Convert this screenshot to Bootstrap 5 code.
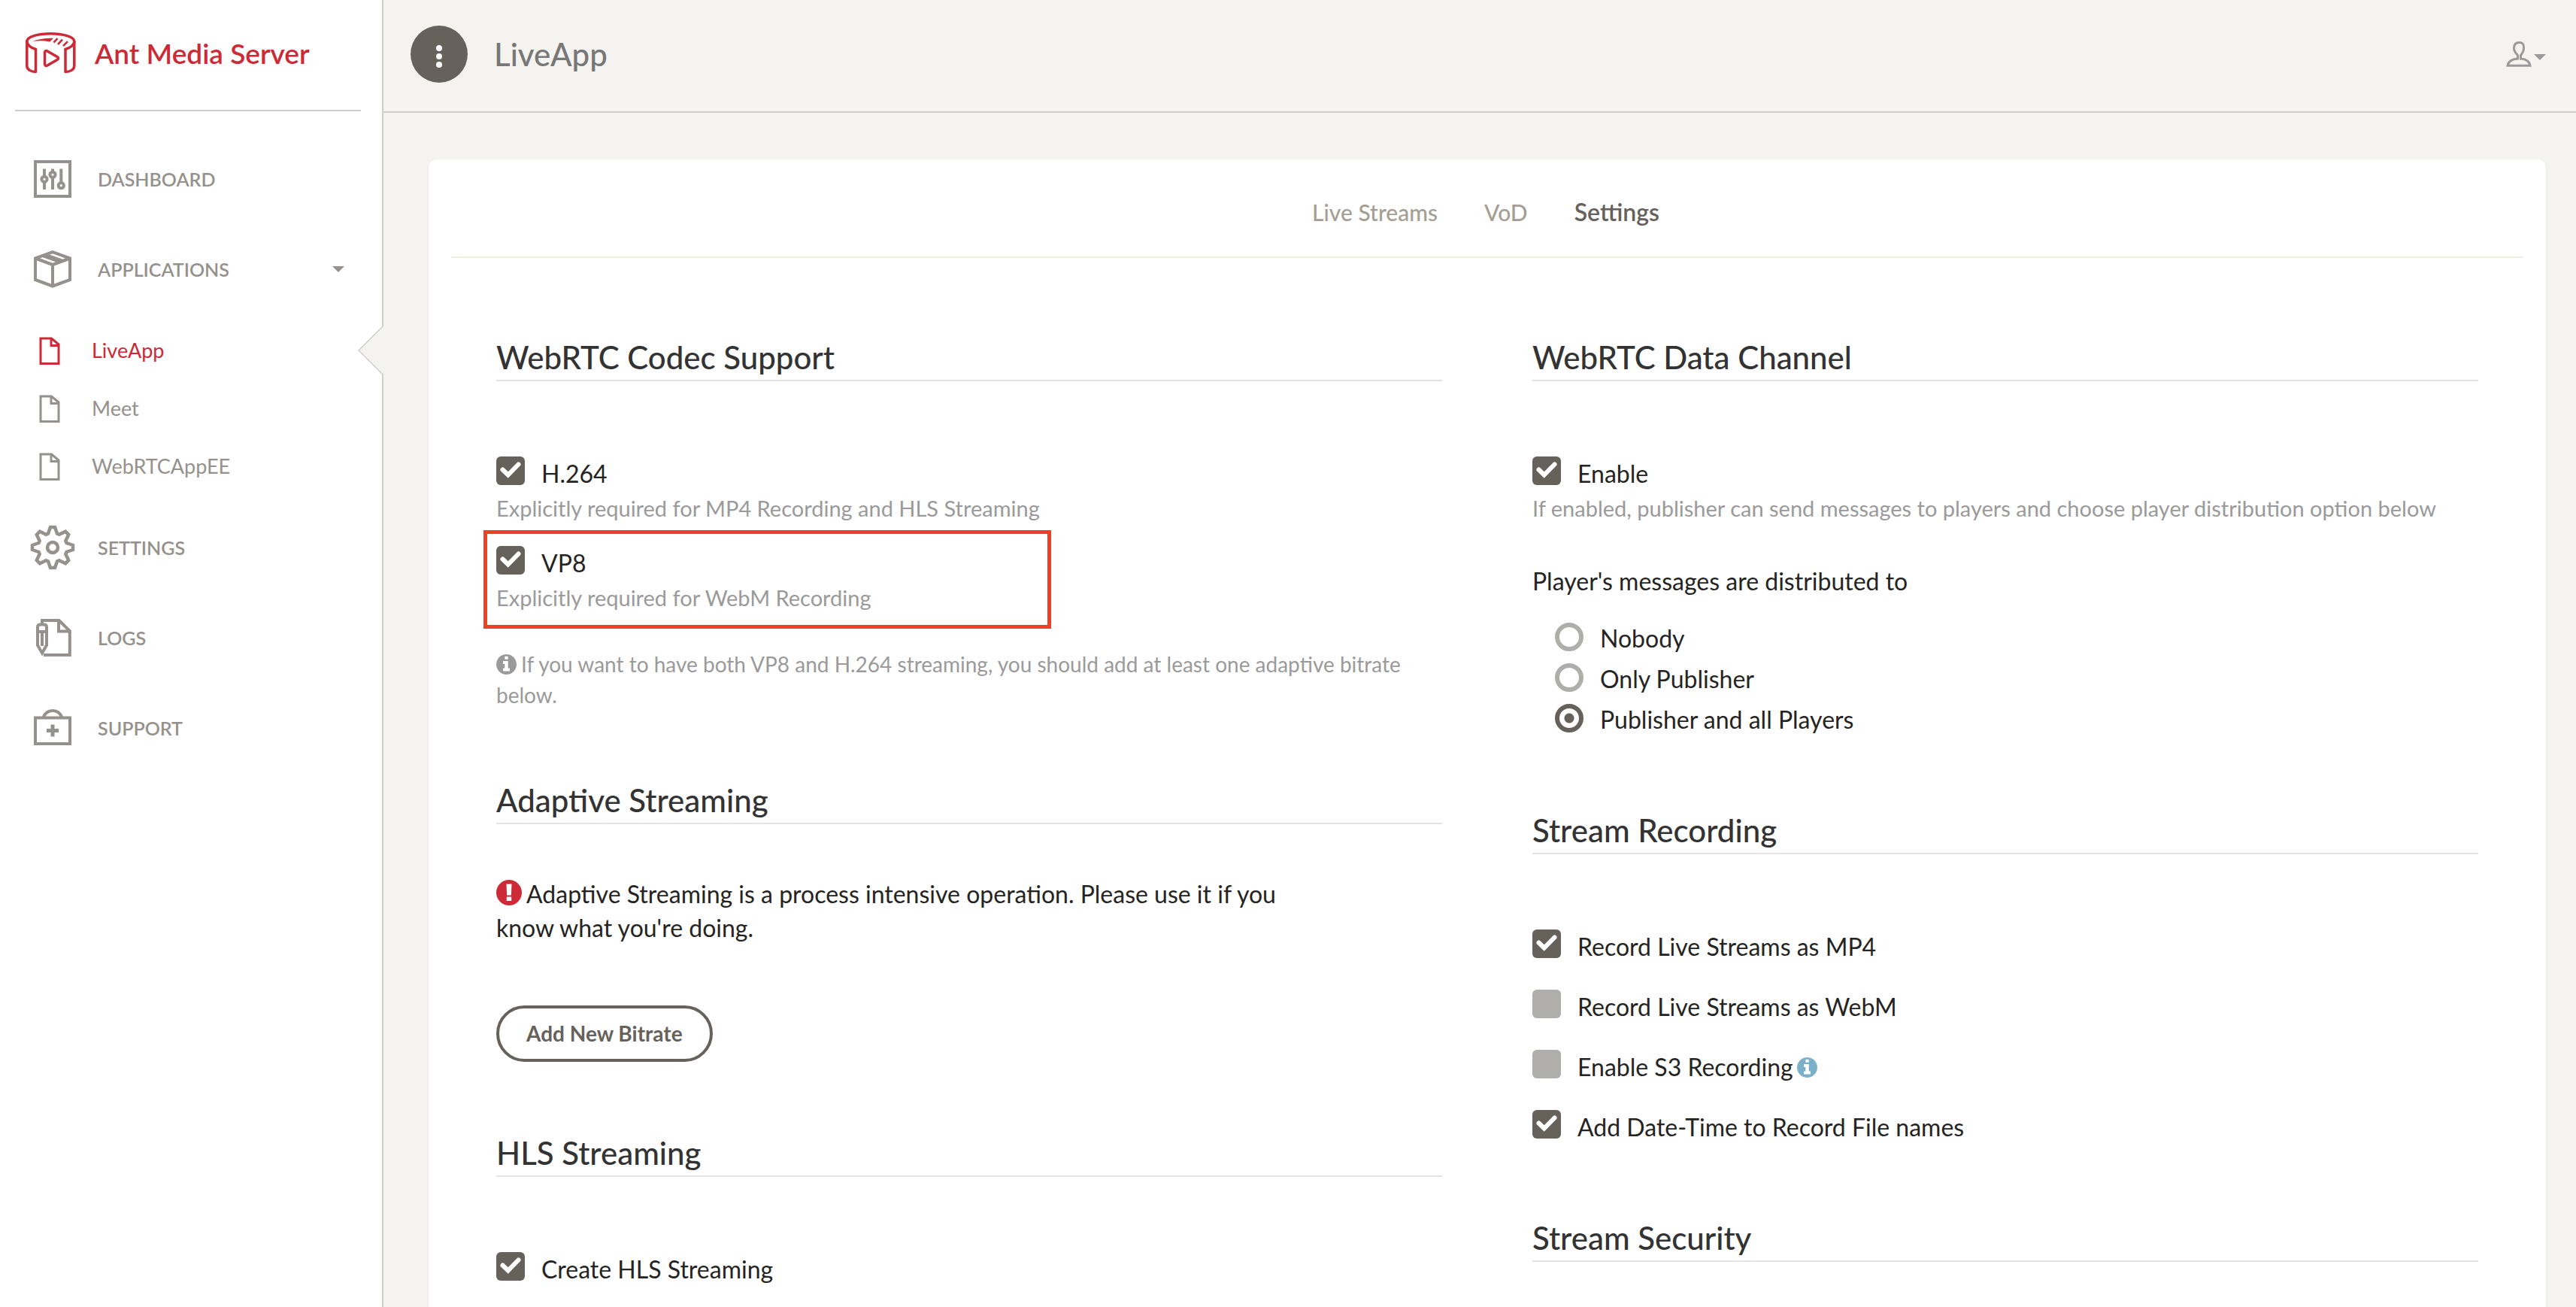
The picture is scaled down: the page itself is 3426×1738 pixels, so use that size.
<!DOCTYPE html>
<html lang="en">
<head>
<meta charset="utf-8">
<meta name="viewport" content="width=device-width, initial-scale=1">
<title>Ant Media Server - LiveApp</title>
<link href="https://cdn.jsdelivr.net/npm/bootstrap@5.3.0/dist/css/bootstrap.min.css" rel="stylesheet">
<style>
  :root { --ams-red: #cb2a36; --ams-brown: #66615b; --ams-line: #cfcfca; --ams-page: #f4f3ef; --ams-nav: #95918c; }
  body { font-family: Lato, "Open Sans", sans-serif; font-size: 32px; line-height: 46px; color: #252422; background: var(--ams-page); }
  svg { display: block; flex: none; }
  a { text-decoration: none; }

  /* sidebar */
  .side-panel { width: 510px; background: #fff; border-right: 2px solid var(--ams-line); }
  .brand-row { height: 148px; margin: 0 28px 30px 20px; padding: 0 0 4px 14px; border-bottom: 2px solid var(--ams-line); gap: 25px; color: var(--ams-red); font-size: 37px; font-weight: 600; }
  .brand-row:hover { color: var(--ams-red); }
  .side-item { height: 120px; padding: 0 50px 0 40px; gap: 30px; color: var(--ams-nav); font-size: 25px; font-weight: 600; }
  .side-sub { padding: 9px 0 10px; }
  .side-sub-item { height: 77px; padding-left: 52px; gap: 42px; color: var(--ams-nav); font-size: 27px; }
  .side-sub-item.is-current { color: var(--ams-red); }
  .notch { position: absolute; right: -2px; top: 5px; }

  /* top bar */
  .top-bar { height: 150px; padding: 0 40px 4px 36px; border-bottom: 2px solid var(--ams-line); }
  .round-btn { width: 76px; height: 76px; background: var(--ams-brown); border: 0; }
  .page-title { font-size: 42px; line-height: 48px; font-weight: 500; color: #777; margin: 0 0 0 35px; }
  .user-btn { border: 0; background: none; gap: 3px; color: #9a9a9a; }

  /* settings card */
  .main-pad { padding: 62px 40px 0 60px; }
  .panel-card { border: 0; border-radius: 12px 12px 0 0; padding: 0 30px; box-shadow: 0 2px 2px rgba(204, 197, 185, .5); }
  .tab-strip { height: 131px; border-bottom: 2px solid #f1eee2; gap: 62px; padding: 10px 4px 0 0; }
  .tab-strip .nav-link { padding: 0; font-size: 30px; font-weight: 500; color: #a49e93; }
  .tab-strip .nav-link.active { font-size: 32px; font-weight: 600; color: var(--ams-brown); }
  .cols { --bs-gutter-x: 120px; margin: 108px 0 0; }
  .sec-title { font-size: 42px; line-height: 48px; font-weight: 500; color: #333; padding-bottom: 6px; border-bottom: 2px solid #e3e3e3; margin: 0 0 100px; }
  .opt { display: flex; align-items: flex-start; gap: 22px; }
  .hint { font-size: 29px; line-height: 36px; color: #9a9a9a; margin: 5px 0 32px; }
  .note { font-size: 28px; line-height: 41px; color: #9a9a9a; margin: 50px 0 95px; }
  .warn { line-height: 45px; margin: -30px 0 81px; }
  .note svg, .warn svg { display: inline-block; margin-right: 6px; vertical-align: -3px; }

  .tick, .dot { appearance: none; flex: none; width: 38px; height: 38px; margin: 0; background-color: #afaeaa; border-radius: 6px; }
  .tick:checked { background: var(--ams-brown) url("data:image/svg+xml,%3Csvg xmlns='http://www.w3.org/2000/svg' viewBox='0 0 38 38'%3E%3Cpath fill='none' stroke='%23fff' stroke-width='6' stroke-linecap='round' d='M8.500 17.500l7.200 7L29.500 10.500' stroke-linejoin='miter'/%3E%3C/svg%3E") center/100%; }
  .dot { border-radius: 50%; border: 6px solid #afaeaa; background: #fff; }
  .dot:checked { border-color: var(--ams-brown); background: radial-gradient(circle, var(--ams-brown) 6px, #fff 7px); }
  .picks { margin: 32px 0 102px 30px; display: grid; gap: 12px; line-height: 42px; }
  .stack { display: grid; gap: 34px; margin-bottom: 100px; }
  .info-mark { color: #7bb0c9; margin-left: 5px; }
  .pill-btn { border: 4px solid var(--ams-brown); border-radius: 40px; height: 75px; padding: 0 36px; font-size: 28px; line-height: 41px; font-weight: 700; color: var(--ams-brown); margin-bottom: 97px; }
  .callout-frame { position: absolute; left: -17px; top: -21px; width: 755px; height: 131px; border: 5px solid #eb4127; pointer-events: none; }
</style>
<script src="https://cdn.jsdelivr.net/npm/bootstrap@5.3.0/dist/js/bootstrap.bundle.min.js"></script>
</head>
<body>
<svg width="0" height="0" class="position-absolute" aria-hidden="true">
  <symbol id="i-info" viewBox="0 0 1536 1536"><path fill="currentColor" d="M1024 1248v-160q0-14-9-23t-23-9h-96v-512q0-14-9-23t-23-9h-320q-14 0-23 9t-9 23v160q0 14 9 23t23 9h96v320h-96q-14 0-23 9t-9 23v160q0 14 9 23t23 9h448q14 0 23-9t9-23zm-128-896v-160q0-14-9-23t-23-9h-192q-14 0-23 9t-9 23v160q0 14 9 23t23 9h192q14 0 23-9t9-23zm640 416q0 209-103 385.500t-279.500 279.500-385.500 103-385.500-103-279.500-279.500-103-385.500 103-385.500 279.500-279.500 385.500-103 385.500 103 279.500 279.500 103 385.500z"/></symbol>
  <symbol id="i-page" viewBox="0 0 28 40"><path fill="none" stroke="currentColor" stroke-width="3" d="M2 4h14.500L26 12v25.500H2zM16 4v9.500h10"/></symbol>
</svg>
<div class="d-flex vh-100 overflow-hidden">
  <aside class="side-panel flex-shrink-0">
    <a href="#" class="brand-row d-flex align-items-center">
      <svg width="67" height="56" viewBox="0 0 67 56" fill="none" stroke="#cb2a36" stroke-width="3.500" stroke-linejoin="round" stroke-linecap="round"><path d="M13.500 22.500C6 20.500 1.800 16 1.800 12 1.800 6 16 1.800 33 1.800S64.800 6 64.800 12c0 4-4.500 8.500-11.800 10.500"/><path d="M1.800 12v32.500c0 5 5.200 8 11.700 8v-30M64.800 12v32.500c0 5-5.300 8-11.800 8v-30M25.500 27c0-2 1.500-3 3.500-2l13 7.500c2 1.200 2 2.800 0 4L29 44c-2 1-3.500 0-3.500-2z"/><path stroke="none" fill="#cb2a36" d="M9 12C17 9 27 7.300 37 7.800L32.500 12.500C24 11 17 11 9 12z"/><path stroke-width="2.600" stroke-linecap="butt" d="M42.500 8.200l-5 5.300M49 9.600l-6 6.400M56 12.200l-6 6"/></svg>
      <span>Ant Media Server</span>
    </a>
    <nav>
      <a href="#" class="side-item d-flex align-items-center"><svg width="60" height="60" viewBox="-5 -5 60 60" fill="none" stroke="currentColor" stroke-width="4"><path d="M2 2h46v46H2zM14 11.500V39M25 11.500V39M36.300 11.500V30"/><g fill="#fff"><circle cx="14" cy="25.300" r="3.600"/><circle cx="25" cy="19.300" r="3.600"/><circle cx="36.300" cy="33.700" r="3.600"/></g></svg><span>DASHBOARD</span></a>
      <a href="#" class="side-item d-flex align-items-center"><svg width="60" height="60" viewBox="-5 -5 60 60" fill="none" stroke="currentColor" stroke-width="4"><path d="M25 2.200L48 10.500V39L25 47.500 2 39V10.500zM2 10.500L25 19l23-8.500M25 19v28M12 7L34.500 15"/><path stroke-width="3" d="M16 5.500L38.500 13.500"/></svg><span>APPLICATIONS</span><svg class="ms-auto" width="16" height="8" viewBox="0 0 16 8"><path fill="currentColor" d="M0 0h16L8 8z"/></svg></a>
      <div class="side-sub">
        <a href="#" class="side-sub-item is-current position-relative d-flex align-items-center"><svg width="28" height="40"><use href="#i-page"/></svg><span>LiveApp</span>
          <svg class="notch" width="34" height="68" viewBox="0 0 34 68"><path fill="#f4f3ef" d="M34 2L1 34l33 32z"/><path fill="none" stroke="#cfcfca" stroke-width="1.500" d="M33 2L1 34l32 32"/></svg></a>
        <a href="#" class="side-sub-item d-flex align-items-center"><svg width="28" height="40"><use href="#i-page"/></svg><span>Meet</span></a>
        <a href="#" class="side-sub-item d-flex align-items-center"><svg width="28" height="40"><use href="#i-page"/></svg><span>WebRTCAppEE</span></a>
      </div>
      <a href="#" class="side-item d-flex align-items-center"><svg width="60" height="60" viewBox="-30 -30 60 60" fill="none" stroke="currentColor" stroke-width="4.500"><path d="M-6-18.500L-3-27H3L6-18.500 8.800-17.300 17-21.200 21.200-17 17.300-8.800 18.500-6 27-3V3L18.500 6 17.300 8.800 21.200 17 17 21.200 8.800 17.300 6 18.500 3 27H-3L-6 18.500-8.800 17.300-17 21.200-21.200 17-17.300 8.800-18.500 6-27 3V-3L-18.500-6-17.300-8.800-21.200-17-17-21.200-8.800-17.300z"/><circle r="7"/></svg><span>SETTINGS</span></a>
      <a href="#" class="side-item d-flex align-items-center"><svg width="60" height="60" viewBox="-5 -5 60 60" fill="none" stroke="currentColor" stroke-width="4"><path d="M11 7V2h22.500L47.800 16v32H13M33 2v14.500h14.500M5 35V11q0-3.500 3.500-3.500h5q3.500 0 3.500 3.500v24l-6 10.500zM5 17h12M11 17v19"/></svg><span>LOGS</span></a>
      <a href="#" class="side-item d-flex align-items-center"><svg width="60" height="60" viewBox="-5 -5 60 60" fill="none" stroke="currentColor" stroke-width="4"><path d="M2 11.500h46v34.500H2zM12.500 11C15 5 19 2 25 2s10 3 12.500 9"/><path stroke-width="5" d="M17 28.500h16M25 20.500v16"/></svg><span>SUPPORT</span></a>
    </nav>
  </aside>

  <div class="flex-grow-1 d-flex flex-column">
    <header class="top-bar d-flex align-items-center flex-shrink-0">
      <button type="button" class="round-btn rounded-circle d-flex align-items-center justify-content-center p-0" aria-label="Toggle menu"><svg width="8" height="36" viewBox="0 0 8 36" fill="#fff"><circle cx="4" cy="10" r="4"/><circle cx="4" cy="21" r="4"/><circle cx="4" cy="32" r="4"/></svg></button>
      <h1 class="page-title">LiveApp</h1>
      <button type="button" class="user-btn d-flex align-items-center ms-auto p-0" aria-label="Account"><svg width="34" height="34" viewBox="0 0 34 34" fill="none" stroke="currentColor" stroke-width="3"><path d="M15.500 23v-4.500c-3-3-5-6-5-9.500 0-5 2.500-7.500 7-7.500s6.500 2.500 6 7.500c0 4-1.500 6.500-4 9.500V23c7 .6 11.500 3.500 12.500 9.300H2C3 26.500 8.500 23.600 15.500 23z"/></svg><svg class="mt-2" width="16" height="8" viewBox="0 0 16 8"><path fill="currentColor" d="M0 0h16L8 8z"/></svg></button>
    </header>

    <main class="main-pad flex-grow-1 d-flex flex-column">
      <div class="card panel-card flex-grow-1">
        <nav class="nav tab-strip justify-content-center align-items-center flex-shrink-0">
          <a class="nav-link" href="#">Live Streams</a>
          <a class="nav-link" href="#">VoD</a>
          <a class="nav-link active" href="#" aria-current="page">Settings</a>
        </nav>
        <div class="row cols">
          <div class="col-6">
            <section>
              <h2 class="sec-title">WebRTC Codec Support</h2>
              <div class="opt"><input class="tick" type="checkbox" id="h264" checked><label for="h264">H.264</label></div>
              <p class="hint">Explicitly required for MP4 Recording and HLS Streaming</p>
              <div class="position-relative">
                <div class="opt"><input class="tick" type="checkbox" id="vp8" checked><label for="vp8">VP8</label></div>
                <p class="hint mb-0">Explicitly required for WebM Recording</p>
                <div class="callout-frame"></div>
              </div>
              <p class="note"><svg width="27" height="27"><use href="#i-info"/></svg>If you want to have both VP8 and H.264 streaming, you should add at least one adaptive bitrate below.</p>
            </section>
            <section>
              <h2 class="sec-title">Adaptive Streaming</h2>
              <p class="warn col-10"><svg width="34" height="34" viewBox="0 0 34 34"><circle cx="17" cy="17" r="17" fill="#cb2a36"/><path fill="#fff" d="M13.500 5.500h7l-.6 15h-5.800zM13.800 22.500h6.400v5.500h-6.400z"/></svg>Adaptive Streaming is a process intensive operation. Please use it if you know what you're doing.</p>
              <button type="button" class="btn pill-btn">Add New Bitrate</button>
            </section>
            <section>
              <h2 class="sec-title">HLS Streaming</h2>
              <div class="opt"><input class="tick" type="checkbox" id="hls" checked><label for="hls">Create HLS Streaming</label></div>
            </section>
          </div>
          <div class="col-6">
            <section>
              <h2 class="sec-title">WebRTC Data Channel</h2>
              <div class="opt"><input class="tick" type="checkbox" id="dc" checked><label for="dc">Enable</label></div>
              <p class="hint">If enabled, publisher can send messages to players and choose player distribution option below</p>
              <div class="pt-4" id="dist">Player's messages are distributed to</div>
              <div class="picks" role="radiogroup" aria-labelledby="dist">
                <div class="opt"><input class="dot" type="radio" name="dist" id="d0"><label for="d0">Nobody</label></div>
                <div class="opt"><input class="dot" type="radio" name="dist" id="d1"><label for="d1">Only Publisher</label></div>
                <div class="opt"><input class="dot" type="radio" name="dist" id="d2" checked><label for="d2">Publisher and all Players</label></div>
              </div>
            </section>
            <section>
              <h2 class="sec-title">Stream Recording</h2>
              <div class="stack">
                <div class="opt"><input class="tick" type="checkbox" id="r1" checked><label for="r1">Record Live Streams as MP4</label></div>
                <div class="opt"><input class="tick" type="checkbox" id="r2"><label for="r2">Record Live Streams as WebM</label></div>
                <div class="opt"><input class="tick" type="checkbox" id="r3"><label for="r3" class="d-flex align-items-center">Enable S3 Recording<svg width="27" height="27" class="info-mark"><use href="#i-info"/></svg></label></div>
                <div class="opt"><input class="tick" type="checkbox" id="r4" checked><label for="r4">Add Date-Time to Record File names</label></div>
              </div>
            </section>
            <section>
              <h2 class="sec-title">Stream Security</h2>
            </section>
          </div>
        </div>
      </div>
    </main>
  </div>
</div>
</body>
</html>
